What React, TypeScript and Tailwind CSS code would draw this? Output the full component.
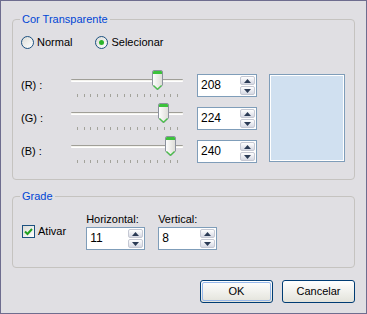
const FONT = "font-['Liberation_Sans',Arial,sans-serif]";

const CHANNELS = [
  { label: '(R) :', value: 208 },
  { label: '(G) :', value: 224 },
  { label: '(B) :', value: 240 },
];

function Arrow({ up }: { up?: boolean }) {
  return (
    <svg width="7" height="4" viewBox="0 0 7 4">
      <path d={up ? 'M0 4 L3.5 0 L7 4 Z' : 'M0 0 L3.5 4 L7 0 Z'} fill="#2b3b55" />
    </svg>
  );
}

function SpinBox({ value, width }: { value: string; width: string }) {
  return (
    <div className={`${width} h-[23px] bg-white border border-[#7f9db9] flex items-stretch`}>
      <div className="flex-1 flex items-center pl-[3px] text-[12px] text-black">{value}</div>
      <div className="flex flex-col gap-[1px] py-[1px] pr-[1px]">
        <div className="w-[15px] flex-1 flex items-center justify-center rounded-[2px] border border-[#c5c8d3] bg-gradient-to-b from-white to-[#d6d9e4]">
          <Arrow up />
        </div>
        <div className="w-[15px] flex-1 flex items-center justify-center rounded-[2px] border border-[#c5c8d3] bg-gradient-to-b from-white to-[#d6d9e4]">
          <Arrow />
        </div>
      </div>
    </div>
  );
}

function Thumb() {
  return (
    <svg width="11" height="21" viewBox="0 0 11 21">
      <defs>
        <linearGradient id="tb" x1="0" x2="1" y1="0" y2="0">
          <stop offset="0" stopColor="#ffffff" />
          <stop offset="1" stopColor="#dcdcd6" />
        </linearGradient>
      </defs>
      <path d="M0.5 2 Q0.5 0.5 2 0.5 H9 Q10.5 0.5 10.5 2 V15 L5.5 20 L0.5 15 Z" fill="url(#tb)" stroke="#8c929e" />
      <path d="M1 2 Q1 1 2 1 H9 Q10 1 10 2 V4 H1 Z" fill="#3cc23c" />
      <path d="M1.5 15.5 L5.5 19.2 L9.5 15.5" fill="none" stroke="#45c145" strokeWidth="1.2" />
    </svg>
  );
}

function Slider({ value }: { value: number }) {
  const left = 4 + (value / 255) * 104 - 5;
  return (
    <div className="relative w-[118px] h-[23px]">
      <div className="absolute left-[3px] right-[3px] top-[5px] h-[3px] bg-[#f4f3ee] border-t border-[#a09f98] border-b border-b-white rounded-[1px]" />
      <div className="absolute left-[9px] right-[8px] top-[20px] flex justify-between">
        {Array.from({ length: 16 }).map((_, i) => (
          <div key={i} className="w-[1px] h-[3px] bg-[#a3a39b]" />
        ))}
      </div>
      <div className="absolute top-[-4px]" style={{ left }}>
        <Thumb />
      </div>
    </div>
  );
}

function Radio({ checked, label }: { checked?: boolean; label: string }) {
  return (
    <div className="flex items-center gap-[3px]">
      <div className="w-[13px] h-[13px] rounded-full border border-[#1c5180] bg-gradient-to-br from-[#dcdcd7] to-white flex items-center justify-center">
        {checked && <div className="w-[5px] h-[5px] rounded-full bg-[#2cb42c]" />}
      </div>
      <span>{label}</span>
    </div>
  );
}

function XpButton({ label, focused }: { label: string; focused?: boolean }) {
  return (
    <div className="w-[73px] h-[23px] rounded-[3px] border border-[#003c74] bg-gradient-to-b from-white to-[#e3e3db] p-[1px]">
      <div
        className={`w-full h-full rounded-[2px] flex items-center justify-center ${
          focused ? 'border border-[#98b8ea]' : ''
        }`}
      >
        {label}
      </div>
    </div>
  );
}

export default function App() {
  return (
    <div
      className={`${FONT} text-[11px] leading-[13px] text-black w-[367px] h-[314px] bg-[#e0dfe3] border border-[#6e6d8f] px-[11px] pt-[12px] flex flex-col`}
    >
      <fieldset className="h-[167px] border border-[#c5c3c0] rounded-[4px]">
        <legend className="ml-[7px] px-[2px] text-[#0046d5]">Cor Transparente</legend>
        <div className="pl-[8px]">
          <div className="flex items-center gap-[23px] mt-[10px]">
            <Radio label="Normal" />
            <Radio checked label="Selecionar" />
          </div>
          <div className="flex mt-[25px]">
            <div className="flex flex-col gap-[10px]">
              {CHANNELS.map((c) => (
                <div key={c.label} className="flex items-center h-[23px]">
                  <span className="w-[47px]">{c.label}</span>
                  <Slider value={c.value} />
                  <div className="ml-[11px]">
                    <SpinBox value={String(c.value)} width="w-[60px]" />
                  </div>
                </div>
              ))}
            </div>
            <div className="ml-[12px] w-[76px] h-[88px] border border-[#7f9db9] bg-[#d0e0f0] shadow-[inset_0_0_0_1px_#ffffff]" />
          </div>
        </div>
      </fieldset>

      <fieldset className="mt-[10px] h-[78px] border border-[#c5c3c0] rounded-[4px]">
        <legend className="ml-[7px] px-[2px] text-[#0046d5]">Grade</legend>
        <div className="pl-[9px] flex items-end mt-[10px]">
          <div className="flex items-center gap-[3px] mb-[12px]">
            <div className="w-[13px] h-[13px] border border-[#1c5180] bg-gradient-to-br from-[#dcdcd7] to-white flex items-center justify-center">
              <svg width="9" height="9" viewBox="0 0 9 9">
                <path d="M1 4.5 L3.5 7 L8 2" fill="none" stroke="#21a121" strokeWidth="2" />
              </svg>
            </div>
            <span>Ativar</span>
          </div>
          <div className="ml-[20px] flex flex-col gap-[1px]">
            <span>Horizontal:</span>
            <SpinBox value="11" width="w-[59px]" />
          </div>
          <div className="ml-[13px] flex flex-col gap-[1px]">
            <span>Vertical:</span>
            <SpinBox value="8" width="w-[59px]" />
          </div>
        </div>
      </fieldset>

      <div className="flex justify-end gap-[9px] mt-[12px]">
        <XpButton label="OK" focused />
        <XpButton label="Cancelar" />
      </div>
    </div>
  );
}
